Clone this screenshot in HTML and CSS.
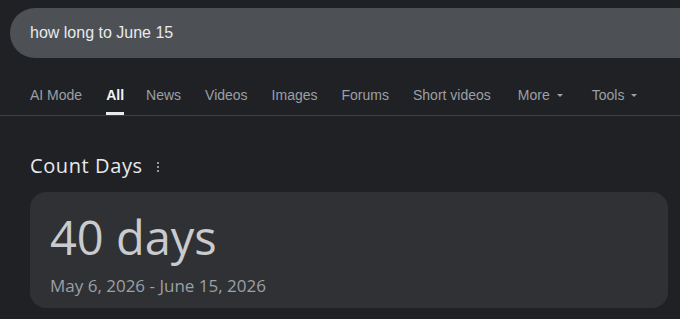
FILE: index.html
```html
<!DOCTYPE html>
<html lang="en">
<head>
<meta charset="utf-8">
<title>how long to June 15</title>
<link rel="stylesheet" href="styles.css">
</head>
<body>
<header class="search-area">
  <div class="search-box">
    <span class="query">how long to June 15</span>
  </div>
</header>
<nav class="tabs">
  <a class="tab">AI Mode</a>
  <a class="tab active">All</a>
  <a class="tab">News</a>
  <a class="tab">Videos</a>
  <a class="tab">Images</a>
  <a class="tab">Forums</a>
  <a class="tab">Short videos</a>
  <a class="tab more">More<span class="caret"></span></a>
  <a class="tab tools">Tools<span class="caret"></span></a>
</nav>
<main class="results">
  <div class="title-row">
    <h2 class="title">Count Days</h2>
    <span class="kebab"><i></i><i></i><i></i></span>
  </div>
  <section class="card">
    <div class="big">40 days</div>
    <div class="range">May 6, 2026 - June 15, 2026</div>
  </section>
</main>
</body>
</html>
```
FILE: styles.css
```css
html, body {
  margin: 0;
  padding: 0;
  background: #202124;
  overflow: hidden;
}
body {
  width: 680px;
  height: 319px;
  font-family: Arial, "Liberation Sans", sans-serif;
  color: #e8eaed;
}
.search-area {
  padding: 8px 0 0 10px;
}
.search-box {
  height: 50px;
  border-radius: 25px 0 0 25px;
  background: #4d5054;
  display: flex;
  align-items: center;
  padding-left: 20px;
}
.query {
  font-size: 16px;
  line-height: 20px;
  color: #e8eaed;
  margin-top: -1px;
}
.tabs {
  display: flex;
  margin-top: 17px;
  padding-left: 18px;
  border-bottom: 1px solid #3c4043;
}
.tab {
  display: flex;
  align-items: center;
  padding: 12px 12px 9px;
  font-size: 14px;
  line-height: 16px;
  color: #9aa0a6;
  border-bottom: 3px solid transparent;
  white-space: nowrap;
}
.tab.active {
  color: #f1f3f4;
  font-weight: bold;
  border-bottom-color: #e8eaed;
  padding-left: 0;
  padding-right: 0;
  margin: 0 10px 0 12px;
}
.tab.more {
  margin-left: 3px;
}
.tab.tools {
  margin-left: 5px;
}
.caret {
  width: 0;
  height: 0;
  margin-left: 7px;
  margin-top: 1px;
  border-left: 3px solid transparent;
  border-right: 3px solid transparent;
  border-top: 3px solid #9aa0a6;
}
.results {
  padding: 36px 12px 0 30px;
}
.title-row {
  display: flex;
  align-items: center;
  height: 28px;
}
.title {
  margin: 0;
  font-family: "Open Sans", sans-serif;
  font-weight: 400;
  font-size: 20px;
  line-height: 28px;
  color: #e8eaed;
  letter-spacing: 0.6px;
}
.kebab {
  display: flex;
  flex-direction: column;
  gap: 2px;
  margin-left: 14px;
  margin-top: 2px;
}
.kebab i {
  display: block;
  width: 2px;
  height: 2px;
  border-radius: 1px;
  background: #bdc1c6;
}
.card {
  margin-top: 12px;
  background: #303134;
  border-radius: 16px;
  padding: 17px 20px 10px;
  height: 116px;
  box-sizing: border-box;
}
.big {
  font-family: "Open Sans", sans-serif;
  font-size: 47px;
  line-height: 57px;
  color: #c9cbcf;
}
.range {
  margin-top: 8px;
  font-family: "Open Sans", sans-serif;
  font-size: 17px;
  line-height: 24px;
  color: #9aa0a6;
}
```
